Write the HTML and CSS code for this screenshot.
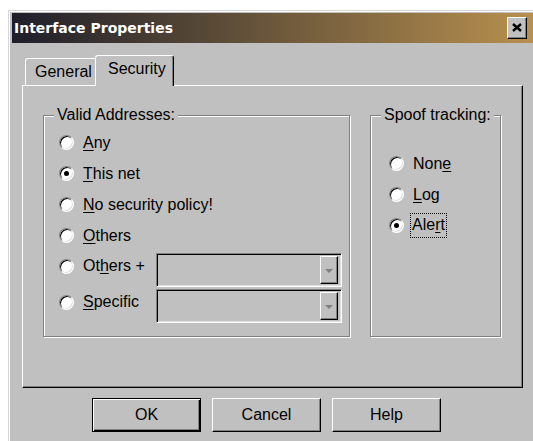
FILE: index.html
```html
<!DOCTYPE html>
<html>
<head>
<meta charset="utf-8">
<title>Interface Properties</title>
<link rel="stylesheet" href="styles.css">
</head>
<body>
<div class="window">
  <div class="titlebar">
    <span class="title">Interface Properties</span>
    <span class="close">
      <svg width="10" height="9" viewBox="0 0 10 9"><path d="M1 1 L9 8 M9 1 L1 8" stroke="#000" stroke-width="2.4" fill="none"/></svg>
    </span>
  </div>
  <div class="content">
    <div class="tabs">
      <div class="tab">General</div>
      <div class="tab active">Security</div>
    </div>
    <div class="panel">
      <fieldset class="group valid">
        <legend>Valid Addresses:</legend>
        <div class="group-body">
          <div class="row"><span class="radio"></span><span class="label"><u>A</u>ny</span></div>
          <div class="row"><span class="radio on"></span><span class="label"><u>T</u>his net</span></div>
          <div class="row"><span class="radio"></span><span class="label"><u>N</u>o security policy!</span></div>
          <div class="row"><span class="radio"></span><span class="label"><u>O</u>thers</span></div>
          <div class="row combo-row">
            <div class="opt"><span class="radio"></span><span class="label">Ot<u>h</u>ers +</span></div>
            <div class="combo"><span class="drop"><i class="arrow"></i></span></div>
          </div>
          <div class="row combo-row">
            <div class="opt"><span class="radio"></span><span class="label"><u>S</u>pecific</span></div>
            <div class="combo"><span class="drop"><i class="arrow"></i></span></div>
          </div>
        </div>
      </fieldset>
      <fieldset class="group spoof">
        <legend>Spoof tracking:</legend>
        <div class="group-body">
          <div class="row"><span class="radio"></span><span class="label">Non<u>e</u></span></div>
          <div class="row"><span class="radio"></span><span class="label"><u>L</u>og</span></div>
          <div class="row"><span class="radio on"></span><span class="label focus">Ale<u>r</u>t</span></div>
        </div>
      </fieldset>
    </div>
    <div class="buttons">
      <button class="btn default">OK</button>
      <button class="btn">Cancel</button>
      <button class="btn">Help</button>
    </div>
  </div>
</div>
</body>
</html>
```

FILE: styles.css
```css
html, body {
  margin: 0;
  padding: 0;
  background: #fff;
  overflow: hidden;
  height: 441px;
}

body {
  font-family: "Liberation Sans", Arial, sans-serif;
  font-size: 16px;
  color: #000;
}

.window {
  margin: 10px 0 0 8px;
  width: 525px;
  height: 431px;
  box-sizing: border-box;
  border-top: 1px solid #d6d6d6;
  border-left: 1px solid #d6d6d6;
  box-shadow: inset 1px 1px #fff;
  background: #c0c0c0;
  padding: 2px 0 0 3px;
}

.titlebar {
  height: 30px;
  display: flex;
  align-items: center;
  justify-content: space-between;
  background: linear-gradient(to right, #1e1e2a 0%, #6b573b 50%, #b8904e 100%);
  padding: 0 6px 0 2px;
}

.title {
  font-family: "DejaVu Sans", Verdana, sans-serif;
  font-weight: bold;
  font-size: 14px;
  color: #fff;
}

.close {
  width: 20px;
  height: 22px;
  box-sizing: border-box;
  background: #c0c0c0;
  border-top: 1px solid #fff;
  border-left: 1px solid #fff;
  border-right: 1px solid #000;
  border-bottom: 1px solid #000;
  box-shadow: inset -1px -1px #808080;
  display: flex;
  align-items: center;
  justify-content: center;
  padding-bottom: 1px;
}

.content {
  padding-left: 10px;
}

/* tab strip */
.tabs {
  display: flex;
  margin-top: 12px;
  height: 30px;
  align-items: flex-end;
}

.tab {
  position: relative;
  box-sizing: border-box;
  height: 27px;
  margin-left: 3px;
  width: 70px;
  padding: 4px 0 0 9px;
  background: #c0c0c0;
  border-top: 1px solid #fff;
  border-left: 1px solid #fff;
  border-radius: 3px 0 0 0;
  line-height: 18px;
}

.tab.active {
  z-index: 1;
  margin-left: 0;
  width: 79px;
  height: 31px;
  margin-bottom: -1px;
  padding: 4px 0 0 12px;
  border-right: 1px solid #000;
  border-radius: 3px 3px 0 0;
  box-shadow: inset -1px 0 #808080;
}

/* tab page */
.panel {
  box-sizing: border-box;
  width: 501px;
  height: 303px;
  border-top: 1px solid #fff;
  border-left: 1px solid #fff;
  border-right: 1px solid #000;
  border-bottom: 1px solid #000;
  box-shadow: inset -1px -1px #808080;
  padding: 20px 0 0 20px;
  display: flex;
  gap: 20px;
  align-items: flex-start;
}

.group {
  margin: 0;
  padding: 0;
  box-sizing: border-box;
  height: 231px;
  border: 1px solid #808080;
  box-shadow: inset 1px 1px #fff, 1px 1px #fff;
}

.group legend {
  margin-left: 10px;
  padding: 0 3px;
  background: #c0c0c0;
  line-height: 18px;
  white-space: nowrap;
}

.valid {
  width: 307px;
}

.valid .group-body {
  padding: 3px 0 0 15px;
}

.spoof {
  width: 131px;
}

.spoof .group-body {
  padding: 24px 0 0 18px;
}

.row {
  display: flex;
  align-items: center;
  height: 31px;
}

.combo-row {
  height: 34px;
  margin-top: 2px;
  align-items: flex-start;
}

.opt {
  display: flex;
  align-items: center;
  width: 97px;
  height: 26px;
}

.radio {
  position: relative;
  flex: none;
  width: 15px;
  height: 15px;
  box-sizing: border-box;
  border-radius: 50%;
  background: #fff;
  border: 1px solid;
  border-color: #808080 #fff #fff #808080;
  box-shadow: inset 1px 1px #000, inset -1px -1px #dfdfdf;
  margin-right: 9px;
}

.radio.on::after {
  content: "";
  position: absolute;
  left: 4px;
  top: 4px;
  width: 5px;
  height: 5px;
  border-radius: 50%;
  background: #000;
}

.label {
  line-height: 18px;
  white-space: nowrap;
}

.label u {
  text-decoration-thickness: 1px;
  text-underline-offset: 2px;
}

.focus {
  outline: 1px dotted #000;
  padding: 2px 1px 3px;
  margin-left: -2px;
}

/* disabled drop-down list */
.combo {
  box-sizing: border-box;
  width: 186px;
  height: 34px;
  border-top: 1px solid #808080;
  border-left: 1px solid #808080;
  border-right: 1px solid #fff;
  border-bottom: 1px solid #fff;
  box-shadow: inset 1px 1px #000, inset -1px -1px #dfdfdf;
  background: #c0c0c0;
  display: flex;
  justify-content: flex-end;
  padding: 2px 3px 2px 0;
}

.drop {
  box-sizing: border-box;
  width: 18px;
  height: 100%;
  border-top: 1px solid #fff;
  border-left: 1px solid #fff;
  border-right: 1px solid #000;
  border-bottom: 1px solid #000;
  box-shadow: inset -1px -1px #808080;
  display: flex;
  align-items: center;
  justify-content: center;
}

.arrow {
  width: 0;
  height: 0;
  border-left: 4px solid transparent;
  border-right: 4px solid transparent;
  border-top: 4px solid #808080;
  margin-top: 1px;
}

/* dialog buttons */
.buttons {
  display: flex;
  gap: 11px;
  margin: 10px 0 0 70px;
}

.btn {
  box-sizing: border-box;
  width: 109px;
  height: 34px;
  font-family: "Liberation Sans", Arial, sans-serif;
  font-size: 16px;
  color: #000;
  background: #c0c0c0;
  border-top: 1px solid #fff;
  border-left: 1px solid #fff;
  border-right: 1px solid #000;
  border-bottom: 1px solid #000;
  box-shadow: inset -1px -1px #808080;
  padding: 0;
}

.btn.default {
  border: 1px solid #000;
  box-shadow: inset 1px 1px #fff, inset -1px -1px #000, inset -2px -2px #808080;
}
```
